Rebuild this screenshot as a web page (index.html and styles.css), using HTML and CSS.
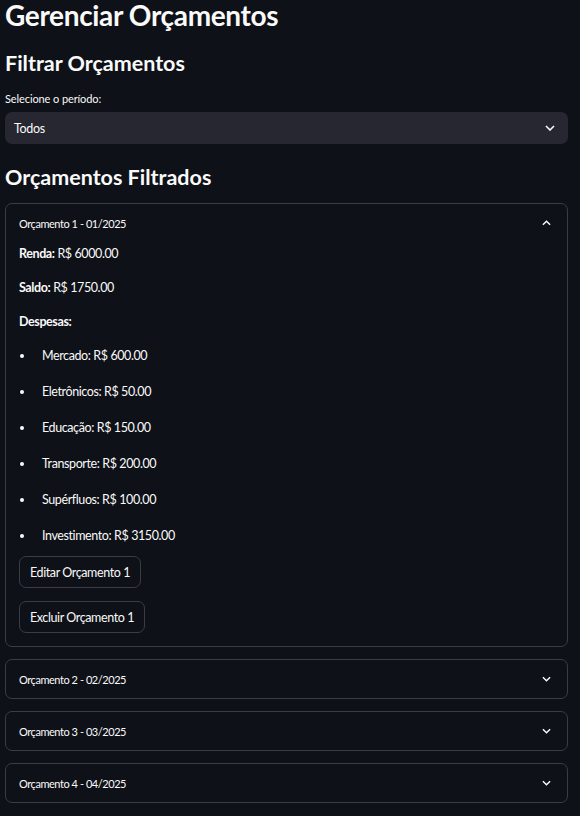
FILE: index.html
```html
<!DOCTYPE html>
<html lang="pt">
<head>
<meta charset="utf-8">
<link rel="stylesheet" href="styles.css">
</head>
<body>
<main class="page">
  <h1 class="title">Gerenciar Orçamentos</h1>
  <h2 class="subtitle sub-filter">Filtrar Orçamentos</h2>
  <div class="field">
    <label class="field-label">Selecione o período:</label>
    <div class="select">
      <span>Todos</span>
      <svg class="chev" viewBox="0 0 10 6" width="10" height="6"><polyline points="1,1 5,5 9,1" fill="none" stroke="#fafafa" stroke-width="1.6"/></svg>
    </div>
  </div>
  <h2 class="subtitle sub-list">Orçamentos Filtrados</h2>
  <div class="expanders">
    <section class="exp open">
      <div class="exp-head">
        <span>Orçamento 1 - 01/2025</span>
        <svg class="chev" viewBox="0 0 10 6" width="10" height="6"><polyline points="1,5 5,1 9,5" fill="none" stroke="#fafafa" stroke-width="1.6"/></svg>
      </div>
      <div class="exp-body">
        <p><b>Renda:</b> R$ 6000.00</p>
        <p><b>Saldo:</b> R$ 1750.00</p>
        <p><b>Despesas:</b></p>
        <ul class="list">
          <li>Mercado: R$ 600.00</li>
          <li>Eletrônicos: R$ 50.00</li>
          <li>Educação: R$ 150.00</li>
          <li>Transporte: R$ 200.00</li>
          <li>Supérfluos: R$ 100.00</li>
          <li>Investimento: R$ 3150.00</li>
        </ul>
        <div class="actions">
          <button class="btn">Editar Orçamento 1</button>
          <button class="btn">Excluir Orçamento 1</button>
        </div>
      </div>
    </section>
    <section class="exp">
      <div class="exp-head">
        <span>Orçamento 2 - 02/2025</span>
        <svg class="chev" viewBox="0 0 10 6" width="10" height="6"><polyline points="1,1 5,5 9,1" fill="none" stroke="#fafafa" stroke-width="1.6"/></svg>
      </div>
    </section>
    <section class="exp">
      <div class="exp-head">
        <span>Orçamento 3 - 03/2025</span>
        <svg class="chev" viewBox="0 0 10 6" width="10" height="6"><polyline points="1,1 5,5 9,1" fill="none" stroke="#fafafa" stroke-width="1.6"/></svg>
      </div>
    </section>
    <section class="exp">
      <div class="exp-head">
        <span>Orçamento 4 - 04/2025</span>
        <svg class="chev" viewBox="0 0 10 6" width="10" height="6"><polyline points="1,1 5,5 9,1" fill="none" stroke="#fafafa" stroke-width="1.6"/></svg>
      </div>
    </section>
  </div>
</main>
</body>
</html>
```
FILE: styles.css
```css
html, body {
  margin: 0;
  padding: 0;
  background: #0e1117;
  color: #fafafa;
  font-family: "Lato", "Noto Sans", sans-serif;
}
.page {
  padding: 0 12px 0 5px;
  display: flex;
  flex-direction: column;
}
.title {
  margin: -1px 0 0;
  font-size: 28px;
  font-weight: 700;
  line-height: 32px;
  letter-spacing: -0.35px;
}
.subtitle {
  margin: 0;
  font-size: 21.5px;
  font-weight: 700;
  line-height: 26px;
}
.sub-filter { margin-top: 19px; }
.sub-list { margin-top: 20px; }
.field {
  margin-top: 16px;
  display: flex;
  flex-direction: column;
  gap: 6px;
}
.field-label {
  font-size: 11px;
  line-height: 14px;
  letter-spacing: -0.1px;
}
.select {
  height: 32px;
  background: #262730;
  border-radius: 7px;
  display: flex;
  align-items: center;
  justify-content: space-between;
  padding: 0 13px 0 9px;
  font-size: 12.5px;
  letter-spacing: -0.3px;
}
.expanders {
  margin-top: 13px;
  display: flex;
  flex-direction: column;
  gap: 12px;
}
.exp {
  border: 1px solid #3b3d44;
  border-radius: 7px;
}
.exp-head {
  height: 38px;
  display: flex;
  align-items: center;
  justify-content: space-between;
  padding: 0 16px 0 13px;
  font-size: 11px;
  letter-spacing: -0.45px;
}
.exp .chev { width: 9px; height: 6px; }
.exp-body {
  padding: 0 13px 13px;
  font-size: 12.5px;
  line-height: 16px;
  letter-spacing: -0.4px;
}
.exp-body p {
  margin: 0 0 18px;
}
.exp-body p:first-child { margin-top: 4px; }
.list {
  margin: 1px 0 0;
  padding: 0;
  list-style: none;
  display: flex;
  flex-direction: column;
  gap: 20px;
}
.list li {
  line-height: 16px;
  display: flex;
  align-items: center;
}
.list li::before {
  content: "";
  width: 4px;
  height: 4px;
  border-radius: 50%;
  background: #fafafa;
  margin: 0 18px 0 1px;
}
.actions {
  margin-top: 12px;
  display: flex;
  flex-direction: column;
  align-items: flex-start;
  gap: 13px;
}
.btn {
  font-family: inherit;
  font-size: 12.5px;
  letter-spacing: -0.4px;
  color: #fafafa;
  background: #0e1117;
  border: 1px solid #3b3d44;
  border-radius: 7px;
  height: 32px;
  padding: 0 10px;
}
```
